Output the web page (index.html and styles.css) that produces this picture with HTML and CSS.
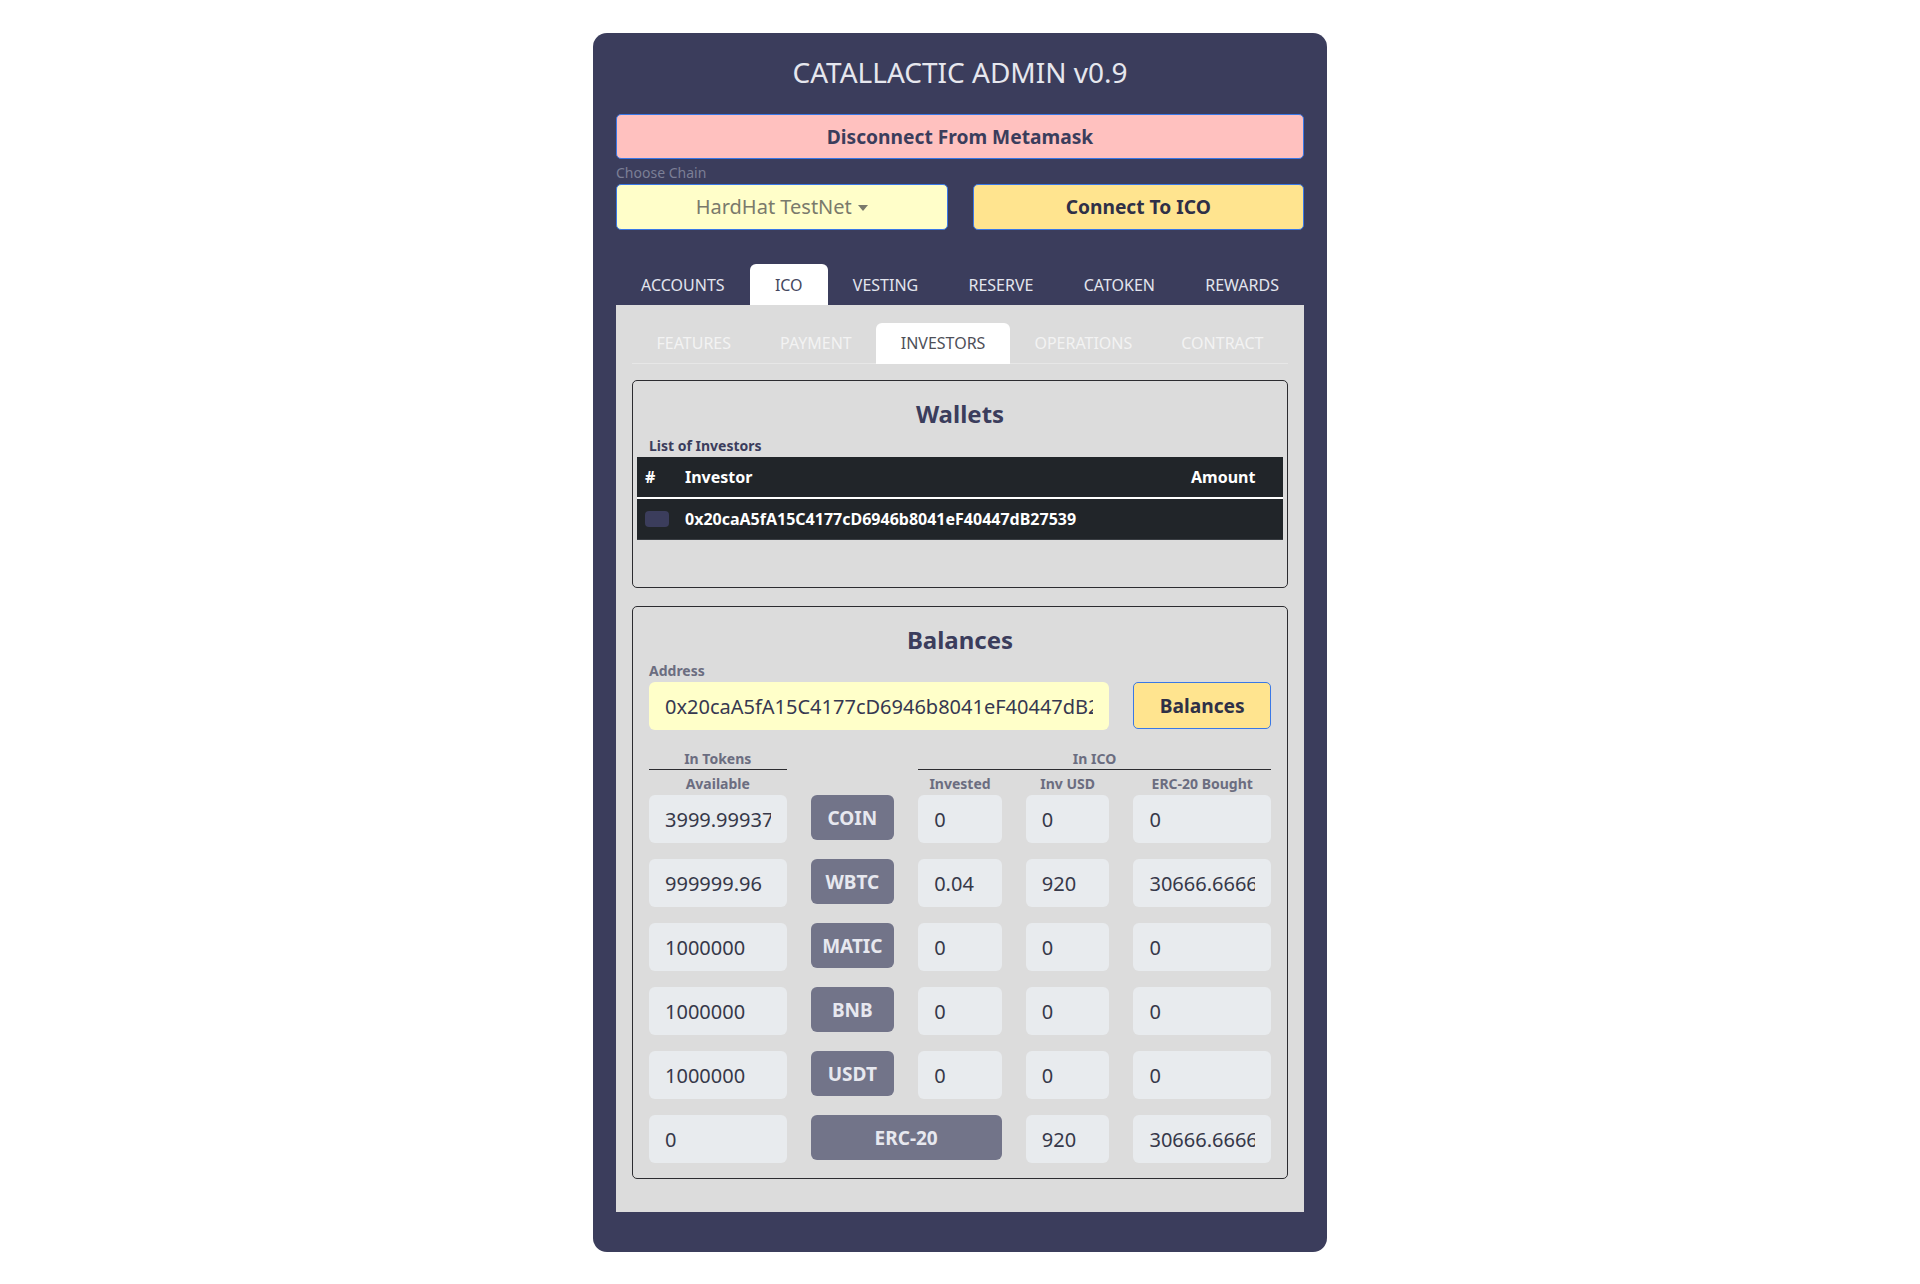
FILE: index.html
```html
<!DOCTYPE html>
<html lang="en">
<head>
<meta charset="utf-8">
<title>Catallactic Admin</title>
<link rel="stylesheet" href="styles.css">
</head>
<body>
<div class="card">
  <h1 class="title">CATALLACTIC ADMIN v0.9</h1>
  <button class="btn btn-disconnect">Disconnect From Metamask</button>
  <div class="chain-label">Choose Chain</div>
  <div class="chain-row">
    <button class="btn btn-chain">HardHat TestNet<span class="caret"></span></button>
    <button class="btn btn-connect">Connect To ICO</button>
  </div>

  <ul class="tabs">
    <li class="tab">ACCOUNTS</li>
    <li class="tab active">ICO</li>
    <li class="tab">VESTING</li>
    <li class="tab">RESERVE</li>
    <li class="tab">CATOKEN</li>
    <li class="tab">REWARDS</li>
  </ul>

  <div class="panel">
    <ul class="subtabs">
      <li class="subtab">FEATURES</li>
      <li class="subtab">PAYMENT</li>
      <li class="subtab active">INVESTORS</li>
      <li class="subtab">OPERATIONS</li>
      <li class="subtab">CONTRACT</li>
    </ul>

    <section class="box box-wallets">
      <h2 class="box-title">Wallets</h2>
      <div class="list-label">List of Investors</div>
      <table class="inv-table">
        <thead>
          <tr>
            <th class="c-num">#</th>
            <th class="c-inv">Investor</th>
            <th class="c-amt">Amount</th>
          </tr>
        </thead>
        <tbody>
          <tr>
            <td class="c-num"><span class="row-badge"></span></td>
            <td class="c-inv">0x20caA5fA15C4177cD6946b8041eF40447dB27539</td>
            <td class="c-amt"></td>
          </tr>
        </tbody>
      </table>
    </section>

    <section class="box box-balances">
      <h2 class="box-title">Balances</h2>
      <div class="field-label">Address</div>
      <div class="grid">
        <input class="addr" type="text" readonly value="0x20caA5fA15C4177cD6946b8041eF40447dB27539">
        <button class="btn btn-balances">Balances</button>
      </div>

      <div class="grid head-row head-top">
        <div class="hcell ruled s1">In Tokens</div>
        <div class="hcell ruled s345">In ICO</div>
      </div>
      <div class="grid head-row head-sub">
        <div class="hcell s1">Available</div>
        <div class="hcell s3">Invested</div>
        <div class="hcell s4">Inv USD</div>
        <div class="hcell s5">ERC-20 Bought</div>
      </div>

      <div class="grid rows">
        <input class="num" readonly value="3999.99937">
        <span class="coin">COIN</span>
        <input class="num" readonly value="0">
        <input class="num" readonly value="0">
        <input class="num" readonly value="0">

        <input class="num" readonly value="999999.96">
        <span class="coin">WBTC</span>
        <input class="num" readonly value="0.04">
        <input class="num" readonly value="920">
        <input class="num" readonly value="30666.66666666666666">

        <input class="num" readonly value="1000000">
        <span class="coin">MATIC</span>
        <input class="num" readonly value="0">
        <input class="num" readonly value="0">
        <input class="num" readonly value="0">

        <input class="num" readonly value="1000000">
        <span class="coin">BNB</span>
        <input class="num" readonly value="0">
        <input class="num" readonly value="0">
        <input class="num" readonly value="0">

        <input class="num" readonly value="1000000">
        <span class="coin">USDT</span>
        <input class="num" readonly value="0">
        <input class="num" readonly value="0">
        <input class="num" readonly value="0">

        <input class="num" readonly value="0">
        <span class="coin coin-wide">ERC-20</span>
        <input class="num" readonly value="920">
        <input class="num" readonly value="30666.66666666666666">
      </div>
    </section>
  </div>
</div>
</body>
</html>
```

FILE: styles.css
```css
* { box-sizing: border-box; }

html, body {
  margin: 0;
  padding: 0;
  background: #ffffff;
  font-family: "Noto Sans", "Open Sans", sans-serif;
}

.card {
  width: 734px;
  margin: 33px auto 0;
  padding: 22px 23px 40px;
  background: #3b3d5c;
  border-radius: 14px;
}

.title {
  margin: 0 0 25px;
  font-size: 28px;
  line-height: 34px;
  font-weight: 400;
  color: #e6e7ee;
  text-align: center;
}

.btn {
  font-family: inherit;
  border: 1px solid #3a78e6;
  border-radius: 5px;
  cursor: pointer;
  display: flex;
  align-items: center;
  justify-content: center;
  padding: 0 16px;
  font-size: 19.2px;
  line-height: 30px;
}

.btn-disconnect {
  width: 100%;
  height: 45px;
  background: #ffc1bf;
  color: #3b3d5c;
  font-weight: 700;
}

.chain-label {
  margin: 3px 0 1px;
  font-size: 14px;
  line-height: 21px;
  color: #7c7f96;
}

.chain-row {
  display: grid;
  grid-template-columns: 1fr 1fr;
  column-gap: 25px;
}

.btn-chain {
  height: 46px;
  background: #fffec9;
  color: #7a7a6c;
  font-size: 20px;
  font-weight: 400;
}

.caret {
  display: inline-block;
  margin-left: 6px;
  margin-top: 2px;
  border-top: 6px solid #7a7a6c;
  border-left: 5px solid transparent;
  border-right: 5px solid transparent;
}

.btn-connect {
  height: 46px;
  background: #ffe48f;
  color: #2f3047;
  font-weight: 700;
}

/* main tabs */
.tabs {
  list-style: none;
  margin: 34px 0 0;
  padding: 0;
  display: flex;
}

.tab {
  flex: 1 1 auto;
  text-align: center;
  padding: 8px 16px;
  border: 1px solid transparent;
  border-bottom: 0;
  border-radius: 6px 6px 0 0;
  font-size: 16px;
  line-height: 24px;
  color: #e3e5ee;
}

.tab.active {
  background: #ffffff;
  color: #45475e;
}

/* panel */
.panel {
  background: #dcdcdc;
  padding: 18px 16px 33px;
}

.subtabs {
  list-style: none;
  margin: 0;
  padding: 0;
  display: flex;
  border-bottom: 1px solid #e7e7e7;
}

.subtab {
  flex: 1 1 auto;
  text-align: center;
  padding: 7px 16px 8px;
  margin-bottom: -1px;
  border: 1px solid transparent;
  border-radius: 6px 6px 0 0;
  font-size: 16px;
  line-height: 24px;
  color: #f3f3f3;
}

.subtab.active {
  background: #ffffff;
  color: #4e4f58;
}

.box {
  border: 1px solid #2c2c30;
  border-radius: 5px;
}

.box-wallets {
  margin-top: 16px;
  padding: 18px 4px 47px;
}

.box-balances {
  margin-top: 18px;
  padding: 18px 16px 15px;
}

.box-title {
  margin: 0 0 6px;
  font-size: 24px;
  line-height: 29px;
  font-weight: 700;
  color: #3b3d5c;
  text-align: center;
}

.box-wallets .box-title { margin-bottom: 7px; }

.list-label {
  padding-left: 12px;
  margin-bottom: 1px;
  font-size: 14px;
  line-height: 21px;
  font-weight: 700;
  color: #3b3d5c;
}

.inv-table {
  width: 100%;
  border-collapse: separate;
  border-spacing: 0;
  background: #212529;
  color: #ffffff;
  font-size: 16px;
  line-height: 24px;
  font-weight: 700;
  text-align: left;
}

.inv-table th,
.inv-table td {
  padding: 8px;
  vertical-align: middle;
}

.inv-table th { border-bottom: 2px solid #ffffff; }
.inv-table td { border-bottom: 1px solid #3a3e43; }

.inv-table .c-num { width: 40px; }
.inv-table .c-amt { width: 100px; }

.row-badge {
  display: block;
  width: 24px;
  height: 16px;
  border-radius: 4px;
  background: #3b3d5c;
}

.field-label {
  margin-bottom: 1px;
  font-size: 14px;
  line-height: 21px;
  font-weight: 700;
  color: #6b6d80;
}

/* balances grid */
.grid {
  display: grid;
  grid-template-columns: 137.25fr 83.5fr 83.5fr 83.5fr 137.25fr;
  column-gap: 24px;
}

.addr {
  grid-column: 1 / 5;
  height: 48px;
  border: 0;
  border-radius: 6px;
  padding: 0 16px;
  background: #ffffc9;
  color: #363850;
  font-family: inherit;
  font-size: 20px;
  outline: none;
  min-width: 0;
}

.btn-balances {
  grid-column: 5;
  height: 47px;
  background: #ffe48f;
  color: #2f3047;
  font-weight: 700;
}

.head-row {
  font-size: 14px;
  line-height: 21px;
  font-weight: 700;
  color: #6b6d80;
  text-align: center;
}

.head-top { margin-top: 18px; }
.head-sub { margin-top: 3px; }

.hcell.ruled { border-bottom: 1px solid #2c2c30; }
.s1 { grid-column: 1; }
.s3 { grid-column: 3; }
.s4 { grid-column: 4; }
.s5 { grid-column: 5; }
.s345 { grid-column: 3 / 6; }

.rows {
  margin-top: 1px;
  row-gap: 16px;
  align-items: start;
}

.num {
  height: 48px;
  min-width: 0;
  width: 100%;
  border: 0;
  border-radius: 6px;
  padding: 0 16px;
  background: #e8ebee;
  color: #363849;
  font-family: inherit;
  font-size: 20px;
  outline: none;
}

.coin {
  height: 45px;
  display: flex;
  align-items: center;
  justify-content: center;
  border-radius: 6px;
  background: #727489;
  color: #e7e8ef;
  font-size: 19px;
  font-weight: 700;
}

.coin-wide { grid-column: 2 / 4; }
```
